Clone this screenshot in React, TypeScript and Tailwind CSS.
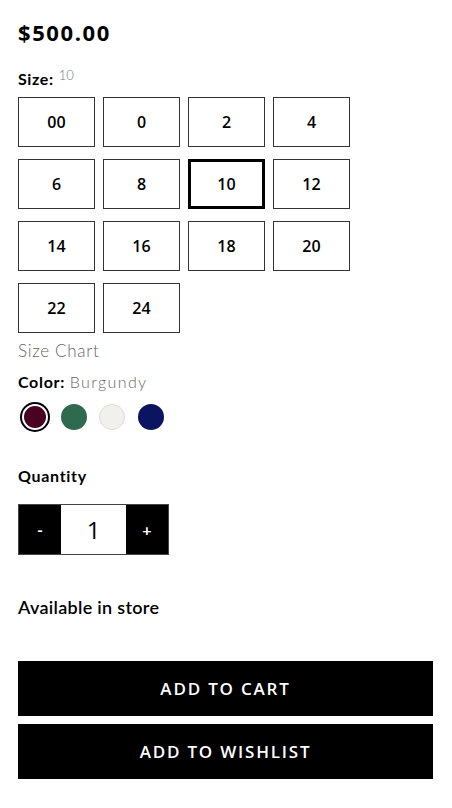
import { useState } from "react";

const sizes = ["00", "0", "2", "4", "6", "8", "10", "12", "14", "16", "18", "20", "22", "24"];

const colors = [
  { name: "Burgundy", hex: "bg-[#4a0020]" },
  { name: "Green", hex: "bg-[#2e6a4e]" },
  { name: "Ivory", hex: "bg-[#f2f0ec]" },
  { name: "Navy", hex: "bg-[#0b1460]" },
];

export default function App() {
  const [size, setSize] = useState("10");
  const [color, setColor] = useState("Burgundy");
  const [qty, setQty] = useState(1);

  return (
    <div className="min-h-[808px] bg-white px-[18px] text-black font-['Lato',sans-serif]">
      <div className="pt-[17px] text-[22px] font-bold leading-[30px] tracking-[1.6px] font-['Open_Sans',sans-serif]">
        $500.00
      </div>

      <div className="mt-[21px] flex items-start gap-[5px] text-[16px] leading-[21px]">
        <span className="font-bold tracking-[0.6px]">Size:</span>
        <span className="text-[13px] font-light leading-[14px] text-[#777]">{size}</span>
      </div>

      <div className="mt-[8px] grid w-[332px] grid-cols-4 gap-x-[8px] gap-y-[12px]">
        {sizes.map((s) => (
          <button
            key={s}
            onClick={() => setSize(s)}
            className={`h-[50px] w-[77px] bg-white text-[16px] font-semibold font-['Open_Sans',sans-serif] ${
              s === size ? "border-[3px] border-black" : "border border-[#333]"
            }`}
          >
            {s}
          </button>
        ))}
      </div>

      <div className="mt-[7px] text-[17px] font-light leading-[22px] tracking-[0.7px] text-[#666]">Size Chart</div>

      <div className="mt-[9px] text-[16px] leading-[21px]">
        <span className="font-bold tracking-[0.7px]">Color: </span>
        <span className="font-light tracking-[1.4px] text-[#666]">{color}</span>
      </div>

      <div className="ml-[4px] mt-[12px] flex items-center gap-[12.5px]">
        {colors.map((c) => (
          <button
            key={c.name}
            onClick={() => setColor(c.name)}
            className={`block h-[26px] w-[26px] rounded-full ${c.hex} ${
              c.name === color ? "border-2 border-white ring-2 ring-black" : ""
            } ${c.name === "Ivory" ? "border border-[#ddd]" : ""}`}
          />
        ))}
      </div>

      <div className="mt-[35px] text-[16px] font-bold leading-[21px] tracking-[0.7px]">Quantity</div>

      <div className="mt-[18px] flex h-[51px] w-[151px] border border-[#444]">
        <button onClick={() => setQty(Math.max(1, qty - 1))} className="w-[42px] bg-black text-[16px] font-bold text-white">
          -
        </button>
        <div className="flex flex-1 items-center justify-center bg-white text-[24px] font-['Open_Sans',sans-serif]">
          {qty}
        </div>
        <button onClick={() => setQty(qty + 1)} className="w-[42px] bg-black text-[16px] font-bold text-white">
          +
        </button>
      </div>

      <div className="mt-[40px] text-[18px] font-semibold leading-[24px] tracking-[0.3px]">Available in store</div>

      <div className="mt-[42px] flex w-[415px] flex-col gap-[8px]">
        <button className="h-[55px] bg-black text-[17px] font-semibold tracking-[1.8px] text-white font-['Open_Sans',sans-serif]">
          ADD TO CART
        </button>
        <button className="h-[55px] bg-black text-[17px] font-semibold tracking-[1.8px] text-white font-['Open_Sans',sans-serif]">
          ADD TO WISHLIST
        </button>
      </div>
    </div>
  );
}
